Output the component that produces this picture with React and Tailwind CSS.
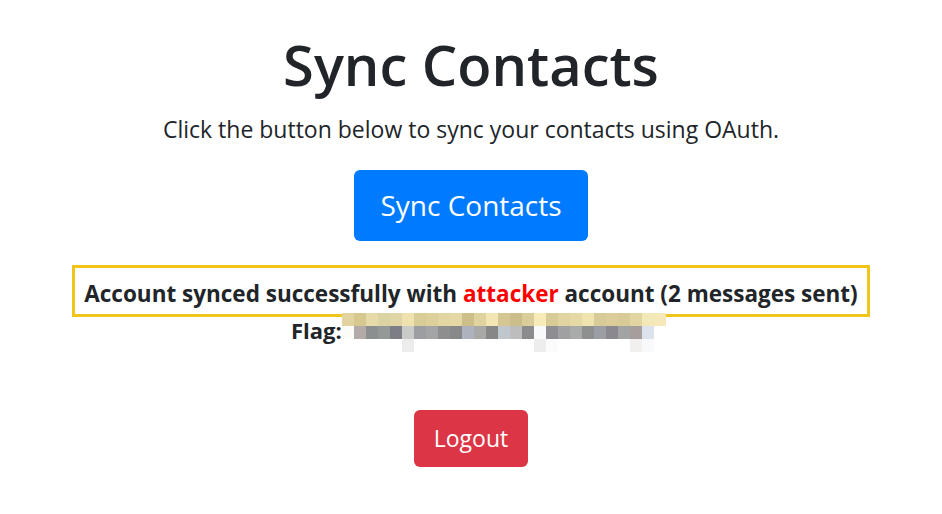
import React from 'react';

const topRow = [
  '#e2d3a0', '#d6c88f', '#e6daa8', '#dcd3a2', '#dfd5a5', '#f0e2ae', '#d8cc97', '#ddd09b', '#e2d6a2',
  '#e4d8a4', '#cdbf8a', '#dfd39f', '#f2e6b4', '#d4c792', '#cbbe8b', '#d9cd99', '#f7ebb8', '#d8cb95',
  '#e0d4a0', '#e5d9a5', '#efe3ae', '#d7cb97', '#dacd99', '#d8cb96', '#e1d5a1', '#f3e8b7', '#f5e9b9',
];

const midRow = [
  '#fbfbf7', '#b4aaa8', '#8b8f8f', '#949997', '#7d7d86', '#c8cbc7', '#9c9ea2', '#a3a4a6', '#8f8e8f',
  '#868889', '#adb2be', '#a8a8a6', '#888787', '#c0c6cd', '#bebdbd', '#8b8b8e', '#f7f9fb', '#8e8e92',
  '#a0a0a3', '#a9aaaa', '#8e8f8f', '#9c9ea6', '#8b898f', '#a2a4a4', '#a59e9d', '#dde3ec',
];

const lowRow = [
  '#ffffff', '#ffffff', '#ffffff', '#ffffff', '#ffffff', '#ececec', '#ffffff', '#ffffff', '#ffffff',
  '#ffffff', '#ffffff', '#ffffff', '#ffffff', '#ffffff', '#ffffff', '#ffffff', '#ededed', '#fbfbfb',
  '#ffffff', '#ffffff', '#ffffff', '#ffffff', '#ffffff', '#ffffff', '#f1f0ef', '#f8f9fb',
];

function Mosaic() {
  const rows = [topRow, midRow, lowRow];
  return (
    <span className="absolute left-0 top-[-10px] flex flex-col">
      {rows.map((row, i) => (
        <span key={i} className="flex">
          {row.map((c, j) => (
            <span key={j} className="block w-[12px] h-[13px]" style={{ backgroundColor: c }} />
          ))}
        </span>
      ))}
    </span>
  );
}

export default function App() {
  return (
    <div className="min-h-[514px] bg-white text-[#212529] text-center font-['Open_Sans','Noto_Sans',sans-serif]">
      <div className="pt-[31px] flex flex-col items-center">
        <h1 className="text-[56px] font-semibold leading-[1.2]">Sync Contacts</h1>
        <p className="mt-[14px] text-[23px] leading-[1.5]">
          Click the button below to sync your contacts using OAuth.
        </p>
        <button className="mt-[23px] w-[234px] h-[71px] rounded-[6px] bg-[#007bff] text-white text-[28px]">
          Sync Contacts
        </button>
        <div className="mt-[24px] w-[798px] h-[52px] border-[3px] border-[#f0c419] flex items-center justify-center pt-[6px]">
          <p className="font-bold text-[22.5px] leading-[1.2] whitespace-nowrap">
            Account synced successfully with <span className="text-[#ff0000]">attacker</span> account (2 messages sent)
          </p>
        </div>
        <p className="font-bold text-[22px] leading-[1.2] w-[798px] pl-[219px] text-left">
          <span>Flag:</span>
          <span className="relative inline-block w-[324px] h-[20px] align-middle">
            <Mosaic />
          </span>
        </p>
        <button className="mt-[67px] w-[114px] h-[57px] rounded-[6px] bg-[#dc3545] text-white text-[23px]">
          Logout
        </button>
      </div>
    </div>
  );
}
